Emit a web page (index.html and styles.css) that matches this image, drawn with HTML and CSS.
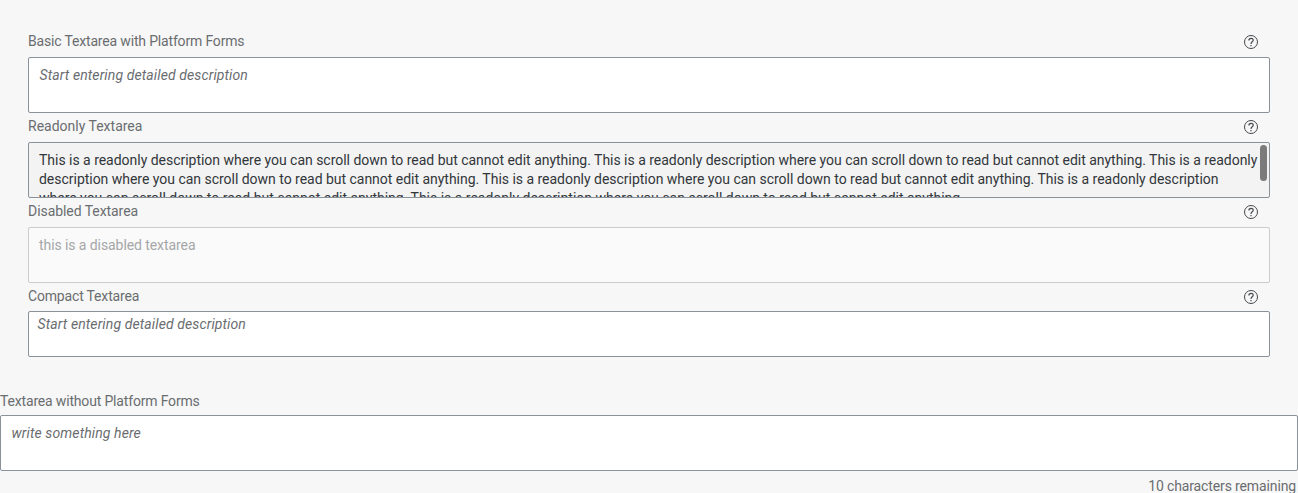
FILE: index.html
```html
<!DOCTYPE html>
<html lang="en">
<head>
<meta charset="utf-8">
<title>Textarea</title>
<link rel="stylesheet" href="styles.css">
</head>
<body>
<svg class="defs" width="0" height="0"><symbol id="help" viewBox="0 0 16 16"><circle cx="8" cy="8" r="6.5" fill="none" stroke="currentColor"/><path d="M5.9 6.5C5.9 3.6 10.2 3.7 10.2 6.2C10.2 7.9 8 7.8 8 9.9" fill="none" stroke="currentColor" stroke-width="1.2"/><path d="M7.4 11h1.2v1.2H7.4z" fill="currentColor"/></symbol></svg>
<main class="form">
<section class="field"><header class="head"><span class="label tight">Basic Textarea with Platform Forms</span><svg class="help"><use href="#help"/></svg></header>
<div class="area hint">Start entering detailed description</div></section>
<section class="field"><header class="head"><span class="label">Readonly Textarea</span><svg class="help"><use href="#help"/></svg></header>
<div class="area readonly"><div class="line">This is a readonly description where you can scroll down to read but cannot edit anything. This is a readonly description where you can scroll down to read but cannot edit anything. This is a readonly</div><div class="line">description where you can scroll down to read but cannot edit anything. This is a readonly description where you can scroll down to read but cannot edit anything. This is a readonly description</div><div class="line last">where you can scroll down to read but cannot edit anything. This is a readonly description where you can scroll down to read but cannot edit anything.</div><i class="thumb"></i></div></section>
<section class="field"><header class="head"><span class="label snug">Disabled Textarea</span><svg class="help"><use href="#help"/></svg></header>
<div class="area disabled">this is a disabled textarea</div></section>
<section class="field"><header class="head"><span class="label tight">Compact Textarea</span><svg class="help"><use href="#help"/></svg></header>
<div class="area hint compact">Start entering detailed description</div></section>
</main>
<section class="plain"><header class="head"><span class="label tight">Textarea without Platform Forms</span></header>
<div class="area hint">write something here</div>
<footer class="counter">10 characters remaining</footer></section>
</body>
</html>
```
FILE: styles.css
```css
* { box-sizing: border-box; }
body { margin: 0; height: 493px; overflow: hidden; background: #f7f7f7; color: #6a6d70; font: 14px/19px Roboto, sans-serif; }
.defs { position: absolute; }
.form { padding: 28px 28px 0; }
.head { display: flex; justify-content: space-between; height: 29px; padding: 4px 11px 0 0; }
.tight { letter-spacing: -.17px; }
.snug { letter-spacing: -.06px; }
.help { width: 16px; height: 16px; margin-top: 2px; color: #46494d; }
.area { position: relative; height: 56px; padding: 8px 10px; overflow: hidden; border: 1px solid #89919a; border-radius: 2px; background: #fff; white-space: nowrap; }
.hint { padding-left: 10.5px; font-style: italic; letter-spacing: .11px; }
.readonly { background: #f3f3f3; color: #32363a; }
.line { letter-spacing: -.023px; }
.last { letter-spacing: -.007px; }
.thumb { position: absolute; right: 2px; top: 2px; width: 7px; height: 36px; border-radius: 3.5px; background: #7b7b7b; }
.disabled { background: #fafafa; border-color: #cacccf; color: #a5a7a8; letter-spacing: -.08px; }
.compact { height: 46px; margin-top: -1px; padding: 3px 8.5px; }
.plain { margin-top: 31px; }
.plain .head { height: 27px; padding: 4px 0 0; }
.counter { padding: 6px 2px 0; text-align: right; letter-spacing: -.13px; }
```
